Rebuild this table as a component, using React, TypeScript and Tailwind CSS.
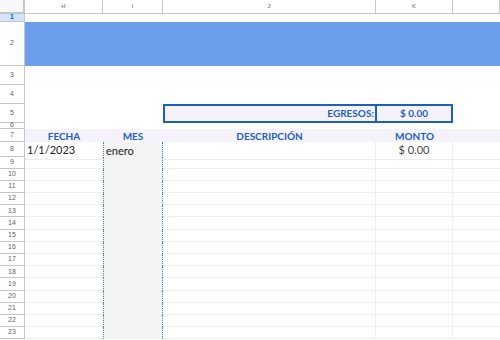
import React from "react";

const COLS = ["H", "I", "J", "K", ""];
const font = { fontFamily: "Lato, 'Open Sans', Arial, sans-serif" };

function RowHead({ n, h, sel }: { n: string; h: string; sel?: boolean }) {
  return (
    <div
      className={`flex items-center justify-center border-r border-b border-[#c4c7c5] text-[7px] ${
        sel ? "bg-[#d3e3fd] font-bold text-[#0b57d0]" : "bg-white text-[#5f6368]"
      }`}
      style={{ height: h, fontFamily: "Arial, sans-serif" }}
    >
      {n}
    </div>
  );
}

export default function App() {
  const dataRows = Array.from({ length: 15 }, (_, i) => i + 9);
  return (
    <div className="w-[500px] h-[340px] overflow-hidden bg-white" style={font}>
      {/* column headers */}
      <div className="grid grid-cols-[25px_78px_60px_213px_77px_1fr] h-[14px]">
        <div className="bg-[#f8f9fa] border-r-[2px] border-b-[2px] border-[#c4c7c5]" />
        {COLS.map((c, i) => (
          <div
            key={i}
            className="flex items-center justify-center border-r border-b border-[#c4c7c5] bg-white text-[6px] text-[#5f6368]"
            style={{ fontFamily: "Arial, sans-serif" }}
          >
            {c}
          </div>
        ))}
      </div>
      <div className="grid grid-cols-[25px_1fr]">
        {/* row 1 */}
        <RowHead n="1" h="8px" sel />
        <div className="h-[8px] bg-white" />
        {/* row 2 */}
        <RowHead n="2" h="44px" />
        <div className="h-[44px] bg-[#6d9eeb]" />
        {/* row 3 */}
        <RowHead n="3" h="19px" />
        <div className="h-[19px] bg-white" />
        {/* row 4 */}
        <RowHead n="4" h="19px" />
        <div className="h-[19px] bg-white" />
        {/* row 5 */}
        <RowHead n="5" h="19px" />
        <div className="h-[19px] grid grid-cols-[138px_290px_1fr]">
          <div />
          <div className="flex border-2 border-[#1c5fbf] bg-[#f6f2fc] text-[10px] font-bold text-[#1c5fbf]">
            <div className="w-[212px] flex items-center justify-end pr-[1px] border-r-2 border-[#1c5fbf]">
              EGRESOS:
            </div>
            <div className="flex-1 flex items-center justify-center">$ 0.00</div>
          </div>
          <div />
        </div>
        {/* row 6 */}
        <RowHead n="6" h="6px" />
        <div className="h-[6px] bg-white" />
        {/* row 7 */}
        <RowHead n="7" h="13px" />
        <div className="h-[13px] grid grid-cols-[78px_60px_213px_77px_1fr] bg-[#f5f2fb] text-[10px] font-bold text-[#1c5fbf]">
          <div className="flex items-center justify-center">FECHA</div>
          <div className="flex items-center justify-center">MES</div>
          <div className="flex items-center justify-center">DESCRIPCIÓN</div>
          <div className="flex items-center justify-center">MONTO</div>
          <div />
        </div>
        {/* row 8 */}
        <RowHead n="8" h="14.5px" />
        <div className="h-[14.5px] grid grid-cols-[78px_60px_213px_77px_1fr] text-[11px] text-[#222]">
          <div className="flex items-center pl-[2px] border-b border-[#ececec]">1/1/2023</div>
          <div className="flex items-center pl-[2px] bg-[#f3f3f3] border-x border-dotted border-[#4a86c8] border-b-[#ececec]">
            enero
          </div>
          <div className="border-r border-b border-[#ececec]" />
          <div className="flex items-center justify-center border-r border-b border-[#ececec] text-[#444]">
            $ 0.00
          </div>
          <div className="border-b border-[#ececec]" />
        </div>
        {dataRows.map((n) => (
          <React.Fragment key={n}>
            <RowHead n={String(n)} h="12.2px" />
            <div className="h-[12.2px] grid grid-cols-[78px_60px_213px_77px_1fr]">
              <div className="border-b border-[#efefef]" />
              <div className="bg-[#f3f3f3] border-x border-dotted border-[#4a86c8]" />
              <div className="border-r border-b border-[#efefef]" />
              <div className="border-r border-b border-[#efefef]" />
              <div className="border-b border-[#efefef]" />
            </div>
          </React.Fragment>
        ))}
      </div>
    </div>
  );
}
